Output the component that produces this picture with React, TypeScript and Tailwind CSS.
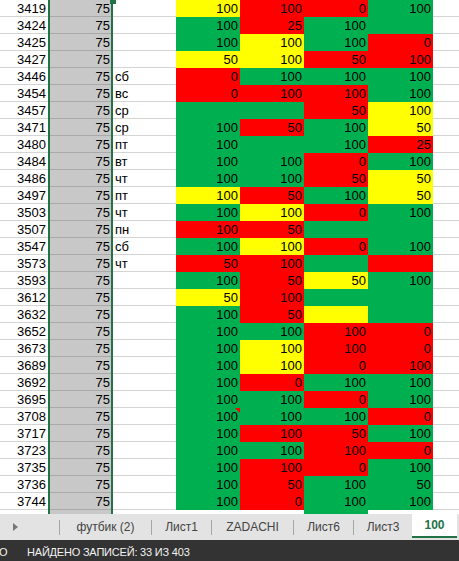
import React from 'react'

type Fill = 'g' | 'y' | 'r' | ''

// [number, weekday, D, E, F, G] — each score cell is "colour:value"
const rows: [string, string, string, string, string, string][] = [
  ['3419', '', 'y:100', 'r:100', 'r:0', 'g:100'],
  ['3424', '', 'g:100', 'r:25', 'g:100', 'g:'],
  ['3425', '', 'g:100', 'y:100', 'g:100', 'r:0'],
  ['3427', '', 'y:50', 'y:100', 'r:50', 'r:100'],
  ['3446', 'сб', 'r:0', 'g:100', 'g:100', 'g:100'],
  ['3454', 'вс', 'r:0', 'r:100', 'r:100', 'g:100'],
  ['3457', 'ср', 'g:', 'g:', 'r:50', 'y:100'],
  ['3471', 'ср', 'g:100', 'r:50', 'g:100', 'y:50'],
  ['3480', 'пт', 'g:100', 'g:', 'g:100', 'r:25'],
  ['3484', 'вт', 'g:100', 'g:100', 'r:0', 'g:100'],
  ['3486', 'чт', 'g:100', 'g:100', 'r:50', 'y:50'],
  ['3497', 'пт', 'y:100', 'r:50', 'g:100', 'y:50'],
  ['3503', 'чт', 'g:100', 'y:100', 'r:0', 'g:100'],
  ['3507', 'пн', 'r:100', 'r:50', 'g:', 'g:'],
  ['3547', 'сб', 'g:100', 'y:100', 'r:0', 'g:100'],
  ['3573', 'чт', 'r:50', 'r:100', 'g:', 'r:'],
  ['3593', '', 'g:100', 'r:50', 'y:50', 'g:100'],
  ['3612', '', 'y:50', 'r:100', 'g:', 'g:'],
  ['3632', '', 'g:100', 'r:50', 'y:', 'g:'],
  ['3652', '', 'g:100', 'g:100', 'r:100', 'r:0'],
  ['3673', '', 'g:100', 'y:100', 'r:100', 'r:0'],
  ['3689', '', 'g:100', 'y:100', 'r:0', 'r:100'],
  ['3692', '', 'g:100', 'r:0', 'g:100', 'g:100'],
  ['3695', '', 'g:100', 'g:100', 'r:0', 'g:100'],
  ['3708', '', 'g:100', 'g:100', 'g:100', 'r:0'],
  ['3717', '', 'g:100', 'r:100', 'r:50', 'g:100'],
  ['3723', '', 'g:100', 'g:100', 'r:100', 'r:0'],
  ['3735', '', 'g:100', 'r:100', 'r:0', 'g:100'],
  ['3736', '', 'g:100', 'r:50', 'g:100', 'g:50'],
  ['3744', '', 'g:100', 'r:0', 'g:100', 'g:100'],
]

const fills: Record<Fill, string> = {
  g: 'bg-[#00b050]',
  y: 'bg-[#ffff00]',
  r: 'bg-[#ff0000]',
  '': 'bg-white border-b border-[#d4d4d4]',
}

function Score({ cell, wide, note }: { cell: string; wide?: boolean; note?: boolean }) {
  const [c, v] = cell.split(':') as [Fill, string]
  return (
    <div className={`relative ${wide ? 'w-[65px]' : 'w-[64px]'} h-[17px] pt-[1px] pr-[2px] text-right leading-[15px] ${fills[c]}`}>
      {v}
      {note && (
        <span className="absolute top-0 right-0 w-0 h-0 border-l-[5px] border-l-transparent border-t-[5px] border-t-[#ff0000]" />
      )}
    </div>
  )
}

function Row({ r }: { r: (typeof rows)[number] }) {
  return (
    <div className="flex h-[17px]">
      <div className="w-[48px] border-b border-[#d4d4d4] pt-[1px] pr-[2px] text-right leading-[15px]">{r[0]}</div>
      <div className="w-[2px] bg-[#217346]" />
      <div className="w-[61px] bg-[#c8c8c8] border-b border-[#a9a9a9] pt-[1px] pr-[1px] text-right leading-[15px]">75</div>
      <div className="w-[2px] bg-[#217346]" />
      <div className="w-[63px] border-b border-[#d4d4d4] pt-[1px] pl-[2px] leading-[15px]">{r[1]}</div>
      <Score cell={r[2]} note={r[0] === '3708'} />
      <Score cell={r[3]} />
      <Score cell={r[4]} />
      <Score cell={r[5]} wide />
      <div className="flex-1 border-b border-[#d4d4d4]" />
    </div>
  )
}

const tabs = [
  { name: 'футбик (2)', w: 'w-[91px]' },
  { name: 'Лист1', w: 'w-[59px]' },
  { name: 'ZADACHI', w: 'w-[81px]' },
  { name: 'Лист6', w: 'w-[59px]' },
  { name: 'Лист3', w: 'w-[58px]' },
]

export default function App() {
  return (
    <div className="w-[459px] h-[561px] flex flex-col bg-white overflow-hidden text-[13px] text-black font-['Liberation_Sans',Arial,sans-serif]">
      {/* sheet */}
      <div className="relative h-[514px] overflow-hidden">
        {rows.map((r) => (
          <Row key={r[0]} r={r} />
        ))}
        <div className="flex h-[4px]">
          <div className="w-[48px]" />
          <div className="w-[2px] bg-[#217346]" />
          <div className="w-[61px] bg-[#c8c8c8]" />
          <div className="w-[2px] bg-[#217346]" />
          <div className="w-[191px]" />
          <div className="w-[64px] bg-[#00b050]" />
        </div>
        {/* fill handle */}
        <div className="absolute top-[-2px] left-[110px] w-[6px] h-[6px] bg-[#217346]" />
      </div>

      {/* sheet tabs */}
      <div className="h-[26px] flex bg-[#e3e3e3] text-[#444] text-[12px]">
        <div className="w-[59px] flex items-center pl-[13px]">
          <span className="w-0 h-0 border-y-[4px] border-y-transparent border-l-[5px] border-l-[#777]" />
        </div>
        {tabs.map((t) => (
          <React.Fragment key={t.name}>
            <div className="w-px h-[15px] self-center bg-[#a6a6a6]" />
            <div className={`${t.w} flex items-center justify-center`}>{t.name}</div>
          </React.Fragment>
        ))}
        <div className="w-[45px] h-[24px] bg-white border-b-2 border-[#217346] flex items-center justify-center font-bold text-[#217346]">
          100
        </div>
      </div>

      {/* status bar */}
      <div className="h-[21px] flex items-center pt-[4px] bg-[#333333] text-[#f2f2f2] text-[11px] tracking-[-0.2px]">
        <span className="-ml-[1px] w-[28px]">О</span>
        <span>НАЙДЕНО ЗАПИСЕЙ: 33 ИЗ 403</span>
      </div>
    </div>
  )
}
